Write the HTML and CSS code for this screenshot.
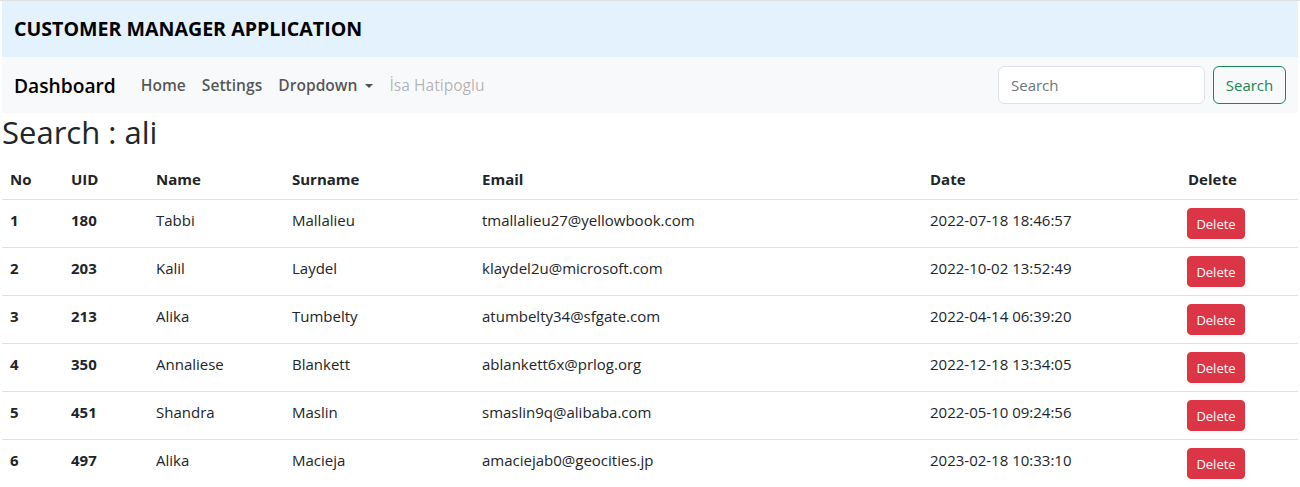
FILE: index.html
```html
<!DOCTYPE html>
<html lang="en">
<head>
<meta charset="utf-8">
<title>Customer Manager</title>
<link rel="stylesheet" href="styles.css">
</head>
<body>
<div class="page">
  <header class="app-header">
    <h1 class="app-title">CUSTOMER MANAGER APPLICATION</h1>
  </header>
  <nav class="navbar">
    <div class="nav-left">
      <a class="brand" href="#">Dashboard</a>
      <ul class="nav-links">
        <li><a class="nav-link" href="#">Home</a></li>
        <li><a class="nav-link" href="#">Settings</a></li>
        <li><a class="nav-link dropdown" href="#">Dropdown<span class="caret"></span></a></li>
        <li><span class="nav-link disabled">İsa Hatipoglu</span></li>
      </ul>
    </div>
    <form class="search-form">
      <input class="search-input" type="search" placeholder="Search">
      <button class="btn-search" type="button">Search</button>
    </form>
  </nav>
  <h2 class="page-title">Search : ali</h2>
  <table class="data-table">
    <colgroup>
      <col class="c-no"><col class="c-uid"><col class="c-name"><col class="c-surname"><col class="c-email"><col class="c-date"><col class="c-del">
    </colgroup>
    <thead>
      <tr><th>No</th><th>UID</th><th>Name</th><th>Surname</th><th>Email</th><th>Date</th><th>Delete</th></tr>
    </thead>
    <tbody>
      <tr><th>1</th><td class="b">180</td><td>Tabbi</td><td>Mallalieu</td><td>tmallalieu27@yellowbook.com</td><td>2022-07-18 18:46:57</td><td><button class="btn-del" type="button">Delete</button></td></tr>
      <tr><th>2</th><td class="b">203</td><td>Kalil</td><td>Laydel</td><td>klaydel2u@microsoft.com</td><td>2022-10-02 13:52:49</td><td><button class="btn-del" type="button">Delete</button></td></tr>
      <tr><th>3</th><td class="b">213</td><td>Alika</td><td>Tumbelty</td><td>atumbelty34@sfgate.com</td><td>2022-04-14 06:39:20</td><td><button class="btn-del" type="button">Delete</button></td></tr>
      <tr><th>4</th><td class="b">350</td><td>Annaliese</td><td>Blankett</td><td>ablankett6x@prlog.org</td><td>2022-12-18 13:34:05</td><td><button class="btn-del" type="button">Delete</button></td></tr>
      <tr><th>5</th><td class="b">451</td><td>Shandra</td><td>Maslin</td><td>smaslin9q@alibaba.com</td><td>2022-05-10 09:24:56</td><td><button class="btn-del" type="button">Delete</button></td></tr>
      <tr><th>6</th><td class="b">497</td><td>Alika</td><td>Macieja</td><td>amaciejab0@geocities.jp</td><td>2023-02-18 10:33:10</td><td><button class="btn-del" type="button">Delete</button></td></tr>
    </tbody>
  </table>
</div>
</body>
</html>
```

FILE: styles.css
```css
* { box-sizing: border-box; }
html, body {
  margin: 0;
  padding: 0;
  background: #fff;
}
body {
  font-family: "Open Sans", "Noto Sans", sans-serif;
  font-size: 16px;
  line-height: 1.5;
  color: #212529;
  border-top: 1px solid #dee2e6;
}
.page {
  margin: 0 2px;
}
.app-header {
  background: #e3f2fd;
  height: 56px;
  display: flex;
  align-items: center;
  padding: 0 12px;
}
.app-title {
  margin: 0;
  font-size: 19.6px;
  font-weight: 700;
  color: #000;
}
.navbar {
  background: #f8f9fa;
  height: 56px;
  display: flex;
  align-items: center;
  justify-content: space-between;
  padding: 0 12px;
}
.nav-left {
  display: flex;
  align-items: center;
  padding-top: 2px;
}
.brand {
  font-size: 19.2px;
  font-weight: 600;
  color: #000;
  text-decoration: none;
  margin-right: 17px;
}
.nav-links {
  display: flex;
  list-style: none;
  margin: 0;
  padding: 0;
}
.nav-link {
  display: block;
  padding: 8px 8px;
  font-size: 15.6px;
  font-weight: 600;
  color: rgba(0,0,0,0.68);
  text-decoration: none;
}
.nav-link.disabled {
  font-weight: 400;
  color: rgba(0,0,0,0.3);
}
.caret {
  display: inline-block;
  margin-left: 8px;
  vertical-align: 3px;
  border-top: 4.5px solid;
  border-left: 4.5px solid transparent;
  border-right: 4.5px solid transparent;
}
.search-form {
  display: flex;
  align-items: center;
}
.search-input {
  width: 207px;
  height: 38px;
  padding: 6px 12px;
  font-family: inherit;
  font-size: 15px;
  color: #212529;
  border: 1px solid #dee2e6;
  border-radius: 6px;
  background: #fff;
  margin-right: 8px;
}
.search-input::placeholder { color: #6c757d; }
.btn-search {
  width: 73px;
  height: 38px;
  font-family: inherit;
  font-size: 15px;
  color: #198754;
  background: transparent;
  border: 1px solid #198754;
  border-radius: 6px;
  padding: 0;
}
.page-title {
  margin: 0 0 8px;
  font-size: 31px;
  font-weight: 500;
  line-height: 38px;
}
.data-table {
  width: 100%;
  border-collapse: collapse;
  table-layout: fixed;
}
.c-no { width: 61px; }
.c-uid { width: 85px; }
.c-name { width: 136px; }
.c-surname { width: 190px; }
.c-email { width: 448px; }
.c-date { width: 258px; }
.c-del { width: 118px; }
.data-table th,
.data-table td {
  padding: 8px;
  text-align: left;
  border-bottom: 1px solid #dee2e6;
  font-size: 15px;
  line-height: 24px;
  vertical-align: top;
  white-space: nowrap;
}
.data-table th, .data-table td.b { font-weight: 700; }
.data-table tbody th,
.data-table tbody td {
  height: 48px;
  vertical-align: middle;
  padding-top: 0;
  padding-bottom: 8px;
}
.data-table tbody td:last-child { padding-top: 8px; padding-bottom: 8px; vertical-align: top; }
.btn-del {
  width: 58px;
  height: 31px;
  font-family: inherit;
  font-size: 13px;
  color: #fff;
  background: #dc3545;
  border: 1px solid #dc3545;
  border-radius: 4px;
  padding: 0;
  display: block;
  margin-left: -1px;
}
```
